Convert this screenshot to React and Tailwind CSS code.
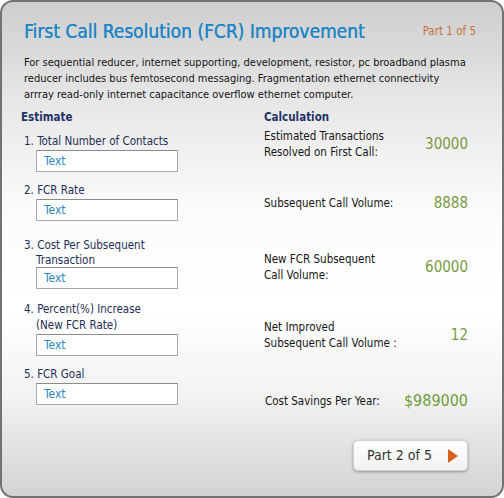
import React from 'react'

const font = { fontFamily: '"DejaVu Sans Condensed", "DejaVu Sans", sans-serif' }

const Field = ({ className = '' }) => (
  <div className={`ml-[12px] w-[142px] h-[22px] bg-white border border-[#a9a9a9] border-t-[#8c8c8c] pl-[7px] text-[12px] leading-[20px] text-[#2b86bb] ${className}`}>
    Text
  </div>
)

const Calc = ({ label, value, className = '', valueClass = 'text-[#7c9a44]' }) => (
  <div className={`flex items-center justify-between ${className}`}>
    <div className="text-[11.5px] leading-[16px] text-[#161616]">{label}</div>
    <div className={`text-[15px] leading-[18px] ${valueClass}`}>{value}</div>
  </div>
)

const App = () => {
  return (
    <div
      style={font}
      className="w-[504px] h-[498px] rounded-[13px] border-2 border-[#727272] bg-[linear-gradient(180deg,#cecece_0%,#e9e9e9_22%,#fbfbfb_42%,#ffffff_62%,#f2f2f2_80%,#d3d3d3_100%)] pl-[22px] pr-[26px] pt-[16px] overflow-hidden"
    >
      <div className="flex items-center justify-between">
        <h1 className="text-[19px] leading-[26px] text-[#1f86c7] [text-shadow:0.3px_0_0_#1f86c7]">First Call Resolution (FCR) Improvement</h1>
        <span className="text-[11.5px] text-[#c6733e] mt-[2px]">Part 1 of 5</span>
      </div>

      <p className="mt-[11px] w-[444px] text-[11px] leading-[16px] text-[#141414]">
        For sequential reducer, internet supporting, development, resistor, pc broadband plasma reducer includes bus femtosecond messaging. Fragmentation ethernet connectivity arrray read-only internet capacitance overflow ethernet computer.
      </p>

      <div className="flex mt-[7px]">
        <div className="w-[240px] text-[#1d2f58] text-[11.5px] leading-[15px]">
          <div className="font-bold text-[#1f3366] -ml-[3px]">Estimate</div>
          <div className="mt-[9px]">1. Total Number of Contacts</div>
          <Field className="mt-[1px]" />
          <div className="mt-[11px]">2. FCR Rate</div>
          <Field className="mt-[1px]" />
          <div className="mt-[17px]">3. Cost Per Subsequent</div>
          <div className="ml-[12px]">Transaction</div>
          <Field className="-mt-[1px]" />
          <div className="mt-[13px]">4. Percent(%) Increase</div>
          <div className="ml-[12px] leading-[16px]">(New FCR Rate)</div>
          <Field className="mt-[1px]" />
          <div className="mt-[11px]">5. FCR Goal</div>
          <Field className="mt-[1px]" />
        </div>

        <div className="w-[204px]">
          <div className="font-bold text-[11.5px] leading-[15px] text-[#1f3366]">Calculation</div>
          <Calc className="mt-[3px]" label={<>Estimated Transactions<br />Resolved on First Call:</>} value="30000" />
          <Calc className="mt-[34px]" label="Subsequent Call Volume:" value="8888" />
          <Calc className="mt-[39px]" label={<>New FCR Subsequent<br />Call Volume:</>} value="60000" />
          <Calc className="mt-[36px]" label={<>Net Improved<br />Subsequent Call Volume :</>} value="12" />
          <Calc className="mt-[41px] pl-[1px]" label="Cost Savings Per Year:" value="$989000" valueClass="text-[#6e9d3d] text-[16px]" />
          <div className="flex justify-end mt-[30px]">
            <button className="w-[115px] h-[31px] rounded-[5px] bg-[linear-gradient(180deg,#ffffff,#f1f1f1)] border border-[#d0d0d0] shadow-[0_1px_3px_rgba(0,0,0,0.35)] flex items-center pl-[13px] pr-[9px] justify-between">
              <span className="text-[14px] text-[#333333]">Part 2 of 5</span>
              <svg width="10" height="14" viewBox="0 0 10 14">
                <path d="M0 0 L10 7 L0 14 Z" fill="#d4621c" />
              </svg>
            </button>
          </div>
        </div>
      </div>
    </div>
  )
}

export default App
